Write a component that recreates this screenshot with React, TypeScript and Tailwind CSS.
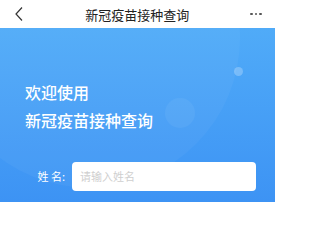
import React from "react";

export default function App() {
  return (
    <div
      className="w-[275px] h-[202px] overflow-hidden flex flex-col bg-white"
      style={{ fontFamily: '"Noto Sans CJK SC", "Noto Sans", sans-serif' }}
    >
      <div className="h-[28px] flex items-center justify-between px-[12px] bg-white">
        <svg width="10" height="16" viewBox="0 0 10 16" className="ml-[2px]">
          <path d="M8 1.5 L2 8 L8 14.5" fill="none" stroke="#333" strokeWidth="1.2" />
        </svg>
        <div className="text-[13px] text-[#222] leading-none">新冠疫苗接种查询</div>
        <div className="flex gap-[2px] items-center mr-[1px]">
          <span className="w-[2.5px] h-[2.5px] rounded-full bg-[#555]" />
          <span className="w-[2.5px] h-[2.5px] rounded-full bg-[#555]" />
          <span className="w-[2.5px] h-[2.5px] rounded-full bg-[#555]" />
        </div>
      </div>
      <div className="relative flex-1 bg-gradient-to-b from-[#50abf8] to-[#3d93f4] overflow-hidden">
        <div className="absolute left-[-60px] top-[-140px] w-[300px] h-[300px] rounded-full bg-white/[0.04]" />
        <div className="absolute left-[234px] top-[39px] w-[9px] h-[9px] rounded-full bg-white/25" />
        <div className="absolute left-[165px] top-[70px] w-[30px] h-[30px] rounded-full bg-white/[0.05]" />
        <div className="relative flex flex-col pl-[25px] pt-[50px] text-white text-[16px] font-medium leading-[28px]">
          <div>欢迎使用</div>
          <div>新冠疫苗接种查询</div>
        </div>
        <div className="relative flex items-center mt-[28px]">
          <div className="w-[72px] pr-[7px] text-right text-[11px] text-white">姓 名:</div>
          <div className="w-[184px] h-[29px] bg-white rounded-[4px] flex items-center pl-[8px] text-[11px] text-[#cfcfcf]">
            请输入姓名
          </div>
        </div>
      </div>
    </div>
  );
}
